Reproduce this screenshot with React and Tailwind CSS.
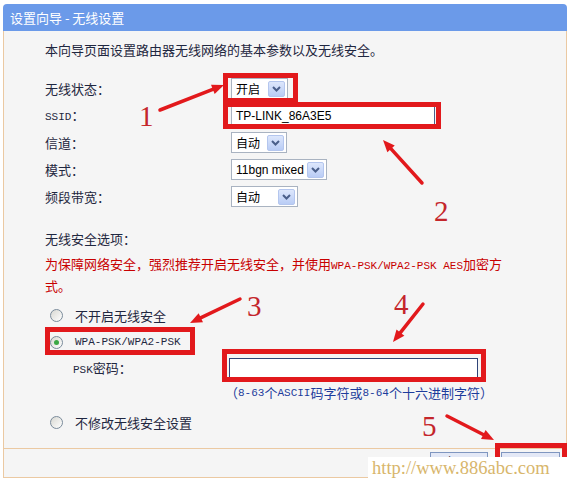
import React from "react";

const MONO = "font-['Liberation_Mono',monospace] text-[11px]";

function Arrow({ x1, y1, x2, y2 }) {
  const dx = x2 - x1, dy = y2 - y1;
  const len = Math.hypot(dx, dy);
  const ux = dx / len, uy = dy / len;
  const hl = 12, hw = 5;
  const bx = x2 - ux * hl, by = y2 - uy * hl;
  const p1 = `${x2},${y2}`;
  const p2 = `${bx - uy * hw},${by + ux * hw}`;
  const p3 = `${bx + uy * hw},${by - ux * hw}`;
  return (
    <g>
      <line x1={x1} y1={y1} x2={bx + ux * 2} y2={by + uy * 2} stroke="#e2191c" strokeWidth="3.5" strokeLinecap="round" />
      <polygon points={`${p1} ${p2} ${p3}`} fill="#e2191c" />
    </g>
  );
}

function Chevron() {
  return (
    <svg width="9" height="6" viewBox="0 0 9 6">
      <path d="M1 1 L4.5 4.5 L8 1" fill="none" stroke="#4a5f8a" strokeWidth="2" />
    </svg>
  );
}

function Select({ className, children, textClass = "" }) {
  return (
    <div className={`flex items-center justify-between h-[21px] bg-white border border-[#a9b3c1] pl-[4px] pr-[2px] ${className}`}>
      <span className={`text-[12px] text-black leading-none ${textClass}`}>{children}</span>
      <span className="w-[17px] h-[16px] rounded-[2px] border border-[#b4c6ee] bg-linear-to-b from-[#dde7fc] to-[#b9ccf5] flex items-center justify-center">
        <Chevron />
      </span>
    </div>
  );
}

function Radio({ checked }) {
  return (
    <span className="ml-[5px] w-[13px] h-[13px] rounded-full border border-[#7a8b9b] bg-linear-to-br from-[#d8d8d2] to-white flex items-center justify-center shrink-0">
      {checked && <span className="w-[5px] h-[5px] rounded-full bg-[#3aa844]" />}
    </span>
  );
}

function Row({ label, children }) {
  return (
    <div className="flex items-center h-[27px]">
      <div className="w-[186px] shrink-0">{label}</div>
      {children}
    </div>
  );
}

export default function App() {
  return (
    <div className="relative w-[571px] h-[479px] bg-white overflow-hidden font-['Noto_Sans_CJK_SC',sans-serif] text-[13px] text-[#1f2740]">
      <div className="pt-[4px] pl-[3px] pr-[4px]">
        <div className="h-[27px] bg-[#6b9ae9] rounded-t-[4px] flex items-center pl-[7px] text-white text-[13px]">
          设置向导 - 无线设置
        </div>
        <div className="border-x border-b border-[#ebc9a2] bg-[#f5f5f5]">
          <div className="pl-[41px] pt-[9px] pb-[12px] border-b border-[#ebc9a2]">
            <div className="h-[20px] flex items-center">本向导页面设置路由器无线网络的基本参数以及无线安全。</div>

            <div className="mt-[15px]">
              <Row label="无线状态：">
                <Select className="w-[57px]">开启</Select>
              </Row>
              <Row label={<span><span className={MONO}>SSID</span>：</span>}>
                <div className="w-[204px] h-[19px] bg-white border border-[#a9b3c1] border-r-[#4b5f8a] flex items-center pl-[4px] font-['Liberation_Sans',sans-serif] text-[12px] text-black">
                  TP-LINK_86A3E5
                </div>
              </Row>
              <Row label="信道：">
                <Select className="w-[56px]">自动</Select>
              </Row>
              <Row label="模式：">
                <Select className="w-[96px]" textClass="font-['Liberation_Sans',sans-serif]">11bgn mixed</Select>
              </Row>
              <Row label="频段带宽：">
                <Select className="w-[67px]">自动</Select>
              </Row>
            </div>

            <div className="mt-[19px] h-[20px] flex items-center">无线安全选项：</div>
            <div className="mt-[5px] leading-[20px] text-[#c80000]">
              为保障网络安全，强烈推荐开启无线安全，并使用<span className={MONO}>WPA-PSK/WPA2-PSK AES</span>加密方
              <br />
              式。
            </div>

            <div className="mt-[6px] h-[27px] flex items-center">
              <Radio />
              <span className="ml-[12px]">不开启无线安全</span>
            </div>
            <div className="h-[27px] flex items-center">
              <Radio checked />
              <span className={`ml-[12px] ${MONO}`}>WPA-PSK/WPA2-PSK</span>
            </div>
            <div className="h-[24px] flex items-center">
              <div className="ml-[28px] w-[156px] shrink-0">
                <span className={MONO}>PSK</span>密码：
              </div>
              <div className="w-[249px] h-[20px] bg-white border border-[#2f4478]" />
            </div>
            <div className="mt-[3px] h-[20px] flex items-center pl-[180px] text-[#1d3c9c] text-[13px]">
              （<span className={MONO}>8-63</span>个<span className={MONO}>ASCII</span>码字符或<span className={MONO}>8-64</span>个十六进制字符）
            </div>
            <div className="mt-[6px] h-[27px] flex items-center">
              <Radio />
              <span className="ml-[12px]">不修改无线安全设置</span>
            </div>
          </div>

          <div className="h-[28px] flex justify-end items-start pt-[3px] pr-[6px] gap-[13px]">
            <button className="w-[58px] h-[22px] border border-[#7f96c0] bg-[#e3e8f6] text-black text-[12px] tracking-[6px] pl-[6px]">上一步</button>
            <button className="w-[59px] h-[22px] border border-[#7f96c0] bg-[#e3e8f6] text-black text-[12px] tracking-[6px] pl-[6px]">下一步</button>
          </div>
        </div>
      </div>

      <svg className="absolute left-0 top-0 pointer-events-none" width="571" height="479" viewBox="0 0 571 479">
        <rect x="225.5" y="75.5" width="70" height="25" fill="none" stroke="#e2191c" strokeWidth="5" />
        <rect x="225.5" y="104.5" width="213" height="22" fill="none" stroke="#e2191c" strokeWidth="5" />
        <rect x="47.5" y="329.5" width="145" height="23" fill="none" stroke="#e2191c" strokeWidth="5" />
        <rect x="224.5" y="351.5" width="259" height="28" fill="none" stroke="#e2191c" strokeWidth="5" />
        <rect x="497.5" y="445.5" width="67" height="40" fill="none" stroke="#e2191c" strokeWidth="5" />
        <Arrow x1={160} y1={110} x2={224} y2={85} />
        <Arrow x1={422} y1={183} x2={383} y2={140} />
        <Arrow x1={240} y1={299} x2={190} y2={323} />
        <Arrow x1={423} y1={304} x2={393} y2={342} />
        <Arrow x1={447} y1={416} x2={494} y2={440} />
      </svg>

      <span className="absolute left-[139px] top-[102px] font-['Liberation_Serif',serif] text-[29px] leading-none text-[#c4262b]">1</span>
      <span className="absolute left-[434px] top-[197px] font-['Liberation_Serif',serif] text-[29px] leading-none text-[#c4262b]">2</span>
      <span className="absolute left-[247px] top-[292px] font-['Liberation_Serif',serif] text-[29px] leading-none text-[#c4262b]">3</span>
      <span className="absolute left-[394px] top-[290px] font-['Liberation_Serif',serif] text-[29px] leading-none text-[#c4262b]">4</span>
      <span className="absolute left-[422px] top-[412px] font-['Liberation_Serif',serif] text-[29px] leading-none text-[#c4262b]">5</span>

      <div className="absolute left-[368px] top-[457px] w-[203px] h-[22px] bg-white flex items-center pl-[4px] font-['Liberation_Serif',serif] text-[18.5px] text-[#d8b66c] leading-none">
        http://www.886abc.com
      </div>
    </div>
  );
}
